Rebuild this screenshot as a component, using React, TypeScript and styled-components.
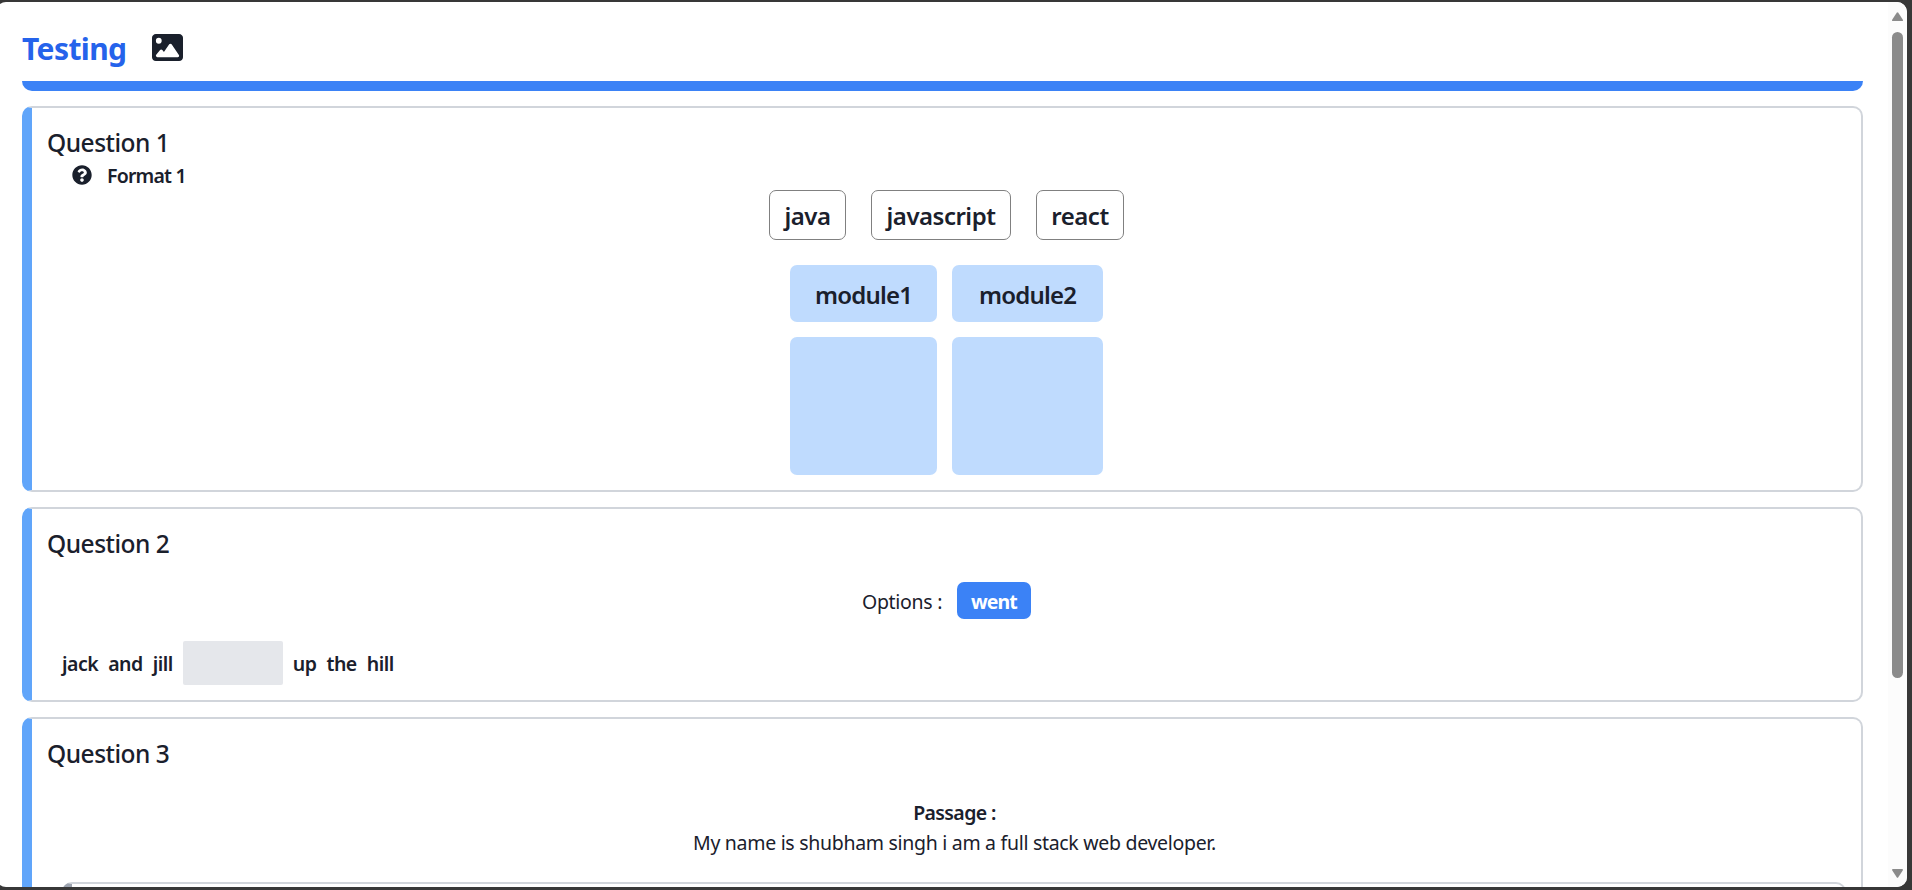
import React from "react";
import styled, { createGlobalStyle } from "styled-components";
import { FaImage } from "react-icons/fa6";
import { FaQuestionCircle } from "react-icons/fa";

const GlobalStyle = createGlobalStyle`
  * { box-sizing: border-box; }
  body {
    margin: 0;
    background: #383838;
    color: #1a202c;
    font-family: "Noto Sans", "Open Sans", sans-serif;
    overflow: hidden;
  }
`;

const Frame = styled.div`
  height: 890px;
  padding: 2px 5px 3px 0;
  background: #383838;
  overflow: hidden;
`;

const Window = styled.div`
  display: flex;
  height: 885px;
  margin-left: -4px;
  border-radius: 10px;
  background: #fff;
  overflow: hidden;
`;

const Page = styled.main`
  flex: 1;
  min-width: 0;
  padding: 27px 25px 0 26px;
  overflow: hidden;
`;

const Header = styled.header`
  display: flex;
  align-items: flex-start;
  gap: 26px;
  height: 52px;
`;

const Title = styled.h1`
  margin: 0;
  width: 104px;
  white-space: nowrap;
  font-size: 30px;
  line-height: 40px;
  font-weight: 700;
  letter-spacing: -0.6px;
  color: #2563eb;
`;

const ImageIcon = styled(FaImage)`
  width: 31px;
  height: 31px;
  margin-top: 3px;
`;

const Divider = styled.div`
  height: 10px;
  background: #3b82f6;
  border-radius: 0 0 10px 10px;
`;

const Card = styled.section`
  margin-top: 15px;
  padding: 17px 0 15px;
  border: 2px solid #d1d5db;
  border-left: 10px solid #60a5fa;
  border-radius: 10px;
`;

const Heading = styled.h2`
  margin: 0 0 0 15px;
  font-size: 24.5px;
  line-height: 35px;
  font-weight: 500;
  letter-spacing: -0.5px;
`;

const Hint = styled.div`
  display: flex;
  align-items: center;
  gap: 15px;
  height: 30px;
  padding-left: 40px;
  font-size: 19.5px;
  line-height: 30px;
  font-weight: 600;
  letter-spacing: -0.8px;

  span {
    padding-top: 2px;
  }
`;

const QuestionIcon = styled(FaQuestionCircle)`
  width: 20px;
  height: 20px;
`;

const Choices = styled.div`
  display: flex;
  justify-content: center;
  gap: 25px;
`;

const Choice = styled.div<{ $width: number }>`
  width: ${(p) => p.$width}px;
  height: 50px;
  padding-top: 1px;
  border: 1px solid #808080;
  border-radius: 7px;
  text-align: center;
  font-size: 24px;
  line-height: 48px;
  font-weight: 600;
  letter-spacing: -0.5px;
`;

const Modules = styled.div`
  display: grid;
  grid-template-columns: 147px 151px;
  grid-template-rows: 57px 138px;
  gap: 15px;
  justify-content: center;
  margin-top: 25px;
`;

const ModuleCell = styled.div`
  padding-top: 1px;
  border-radius: 7px;
  background: #bfdbfe;
  text-align: center;
  font-size: 24px;
  line-height: 57px;
  font-weight: 600;
  letter-spacing: -0.8px;
`;

const Options = styled.div`
  display: flex;
  justify-content: center;
  gap: 15px;
  height: 37px;
  margin-top: 21px;
  font-size: 19.5px;
  line-height: 40px;
`;

const OptionsLabel = styled.span`
  width: 80px;
  white-space: nowrap;
  letter-spacing: -0.3px;
`;

const Option = styled.span`
  width: 74px;
  height: 37px;
  border-radius: 7px;
  background: #3b82f6;
  color: #fff;
  text-align: center;
  font-weight: 700;
  letter-spacing: -0.9px;
`;

const Sentence = styled.div`
  display: flex;
  align-items: center;
  gap: 10px;
  height: 44px;
  margin: 22px 0 0 30px;
  font-size: 19.5px;
  font-weight: 600;
  letter-spacing: -0.5px;
`;

const Word = styled.span`
  padding-top: 1px;
`;

const Blank = styled.span`
  width: 100px;
  height: 44px;
  border-radius: 2px;
  background: #e5e7eb;
`;

const Passage = styled.div`
  margin: 27px 15px 0 31px;
  text-align: center;
  font-size: 19.5px;
  line-height: 30px;
  letter-spacing: -0.3px;
`;

const PassageTitle = styled.div`
  font-weight: 600;
  letter-spacing: -0.6px;
`;

const SubQuestion = styled.div`
  height: 200px;
  margin: 24px 15px 0 30px;
  border: 2px solid #d1d5db;
  border-left: 10px solid #9ca3af;
  border-radius: 10px;
`;

const ScrollTrack = styled.div`
  display: flex;
  flex-direction: column;
  align-items: center;
  width: 19px;
  padding: 10px 0 9px 0;
  background: #fcfcfc;
`;

const Thumb = styled.div`
  width: 11px;
  height: 646px;
  margin: 11px 0 auto;
  border-radius: 6px;
  background: #8b8b8b;
`;

const Arrow = ({ down = false }: { down?: boolean }) => (
  <svg width="11" height="9" viewBox="0 0 11 9" fill="#8b8b8b">
    <path
      d={
        down
          ? "M1 0h9q1.5 0 .7 1.4L6.3 8.2q-.8 1.2-1.6 0L.3 1.4Q-.5 0 1 0z"
          : "M1 9h9q1.5 0 .7-1.4L6.3.8q-.8-1.2-1.6 0L.3 7.6Q-.5 9 1 9z"
      }
    />
  </svg>
);

const choices = [
  { label: "java", width: 77 },
  { label: "javascript", width: 140 },
  { label: "react", width: 88 },
];

export default function App() {
  return (
    <Frame>
      <GlobalStyle />
      <Window>
        <Page>
          <Header>
            <Title>Testing</Title>
            <ImageIcon />
          </Header>
          <Divider />
          <Card>
            <Heading>Question 1</Heading>
            <Hint>
              <QuestionIcon />
              <span>Format 1</span>
            </Hint>
            <Choices>
              {choices.map((c) => (
                <Choice key={c.label} $width={c.width}>
                  {c.label}
                </Choice>
              ))}
            </Choices>
            <Modules>
              <ModuleCell>module1</ModuleCell>
              <ModuleCell>module2</ModuleCell>
              <ModuleCell />
              <ModuleCell />
            </Modules>
          </Card>
          <Card>
            <Heading>Question 2</Heading>
            <Options>
              <OptionsLabel>Options :</OptionsLabel>
              <Option>went</Option>
            </Options>
            <Sentence>
              <Word>jack</Word>
              <Word>and</Word>
              <Word>jill</Word>
              <Blank />
              <Word>up</Word>
              <Word>the</Word>
              <Word>hill</Word>
            </Sentence>
          </Card>
          <Card>
            <Heading>Question 3</Heading>
            <Passage>
              <PassageTitle>Passage :</PassageTitle>
              <div>My name is shubham singh i am a full stack web developer.</div>
            </Passage>
            <SubQuestion />
          </Card>
        </Page>
        <ScrollTrack>
          <Arrow />
          <Thumb />
          <Arrow down />
        </ScrollTrack>
      </Window>
    </Frame>
  );
}
